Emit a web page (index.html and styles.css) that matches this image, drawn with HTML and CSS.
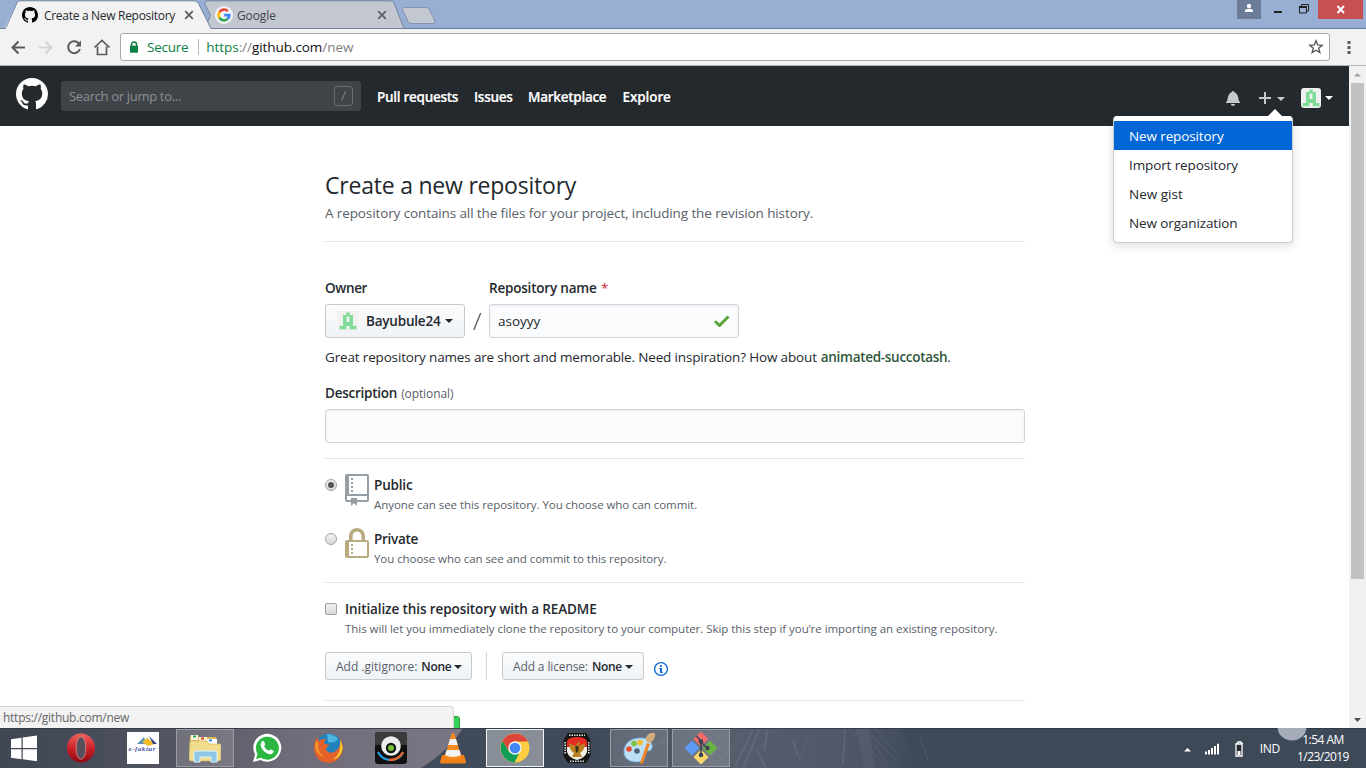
FILE: index.html
```html
<!DOCTYPE html>
<html lang="en">
<head>
<meta charset="utf-8">
<title>Create a New Repository</title>
<link rel="stylesheet" href="styles.css">
</head>
<body>
<svg class="defs" width="0" height="0">
  <symbol id="mark" viewBox="0 0 16 16"><path d="M8 0C3.58 0 0 3.58 0 8c0 3.54 2.29 6.53 5.47 7.59.4.07.55-.17.55-.38 0-.19-.01-.82-.01-1.49-2.01.37-2.53-.49-2.69-.94-.09-.23-.48-.94-.82-1.13-.28-.15-.68-.52-.01-.53.63-.01 1.08.58 1.23.82.72 1.21 1.87.87 2.33.66.07-.52.28-.87.51-1.07-1.78-.2-3.64-.89-3.64-3.95 0-.87.31-1.59.82-2.15-.08-.2-.36-1.02.08-2.12 0 0 .67-.21 2.2.82.64-.18 1.32-.27 2-.27.68 0 1.36.09 2 .27 1.53-1.04 2.2-.82 2.2-.82.44 1.1.16 1.92.08 2.12.51.56.82 1.27.82 2.15 0 3.07-1.87 3.75-3.65 3.95.29.25.54.73.54 1.48 0 1.07-.01 1.93-.01 2.2 0 .21.15.46.55.38A8.013 8.013 0 0 0 16 8c0-4.42-3.58-8-8-8z"/></symbol>
  <symbol id="avatar" viewBox="0 0 20 20"><path fill="#f0f0f0" d="M0 0h20v20H0z"/><path fill="#7fdc96" d="M8.300 1.500h3.400v2.500h3.300v11h3.400v3.300h-6.700v-3.300h-3.400v3.300h-6.700v-3.300h3.400v-11h3.300z"/><path fill="#f0f0f0" d="M8.600 5.500h2.800v5.500h-2.800z"/></symbol>
</svg>
<div class="tabs">
  <svg class="tabs-bg" width="1366" height="29" viewBox="0 0 1366 29">
    <path d="M0 28.500H1366" stroke="#66789b"/>
    <path d="M205 28.500 210.500 15 204.500 3Q205.500.8 209 .8H390Q393 .8 394 3L404 28.500z" fill="#c3c8d0" stroke="#7383a0"/>
    <path d="M402.500 9.500Q402 7.500 404 7.500H426.500Q428.500 7.500 429.300 9.500L435 21Q435.500 23.500 433 23.500H411Q408.800 23.500 408 21.500z" fill="#c3c8d0" stroke="#8592ab"/>
    <path d="M4 29 17 2.800Q18 .8 20.500 .8H194Q197 .8 198.500 3.500L211 29z" fill="#f2f2f2"/>
    <path d="M0 28.500H5.500L17 2.800Q18 .8 20.500 .8H194Q197 .8 198.500 3.500L211 28.500" fill="none" stroke="#7383a0"/>
  </svg>
  <div class="tab tab-active">
    <svg width="16" height="16"><use href="#mark"/></svg>
    <span class="t tab1-title">Create a New Repository</span>
    <svg class="x x1" width="10" height="10" viewBox="0 0 10 10"><path d="M1.200 1.200l7.600 7.600M8.800 1.200L1.200 8.800" stroke="#5a5a5a" stroke-width="1.700"/></svg>
  </div>
  <div class="tab tab-two">
    <svg width="18" height="18" viewBox="0 0 18 18"><circle cx="9" cy="9" r="9" fill="#f1f3f6"/><g fill="none" stroke-width="2.600"><path d="M12.900 5.200A5.400 5.400 0 0 0 4.400 6.200" stroke="#ea4335"/><path d="M4.400 6.200A5.400 5.400 0 0 0 4.400 11.800" stroke="#fbbc05"/><path d="M4.400 11.800A5.400 5.400 0 0 0 12.500 13.100" stroke="#34a853"/><path d="M12.500 13.100A5.400 5.400 0 0 0 14.400 9.100H9.200" stroke="#4285f4"/></g></svg>
    <span class="t tab2-title">Google</span>
    <svg class="x x2" width="10" height="10" viewBox="0 0 10 10"><path d="M1.200 1.200l7.600 7.600M8.800 1.200L1.200 8.800" stroke="#5d6066" stroke-width="1.700"/></svg>
  </div>
  <div class="winctl">
    <div class="user"><svg width="24" height="19"><circle cx="12" cy="6" r="2.200" fill="#fff"/><path d="M8 12V10.500Q8 8.800 12 8.800T16 10.500V12z" fill="#fff"/></svg></div>
    <svg width="57" height="19"><path d="M13 11h8v2h-8z" fill="#222"/><path d="M38.500 6.500h7v6.500h-7zM40.500 6V4.500h7v6.500H46" fill="none" stroke="#222"/><path d="M38 6h8v2h-8z" fill="#222"/></svg>
    <div class="close"><svg width="45" height="19"><path d="M19.500 6l6.500 7M26 6l-6.500 7" stroke="#fff" stroke-width="1.900"/></svg></div>
  </div>
</div>
<div class="toolbar">
  <svg class="nav" width="120" height="37" viewBox="0 0 120 37"><g fill="none" stroke-width="2"><path d="M25 18.500H12.500M18.500 12.500l-6 6 6 6" stroke="#5a5a5a"/><path d="M39 18.500h12.500M45.500 12.500l6 6-6 6" stroke="#d3d3d3"/><path d="M79.300 15A6 6 0 1 0 79.900 20" stroke="#5a5a5a"/><path d="M94.500 18.500l7.500-7 7.500 7M97.500 17.500v8h9v-8" stroke="#5a5a5a" stroke-width="1.700"/></g><path d="M81 11.500v6h-6z" fill="#5a5a5a"/></svg>
  <div class="omni">
    <svg class="lock" width="10" height="13" viewBox="0 0 10 13"><path d="M2.500 5V3.500a2.500 2.500 0 0 1 5 0V5" fill="none" stroke="#0b8043" stroke-width="1.500"/><path d="M1 4.700h8v7H1z" fill="#0b8043"/></svg>
    <span class="t secure">Secure</span><span class="sep"></span>
    <span class="t url"><span class="green">https</span><span class="gray">://</span>github.com<span class="gray">/new</span></span>
    <svg class="star" width="16" height="16" viewBox="0 0 16 16"><path d="M8 1.800l1.700 4.200 4.500.3-3.500 2.900 1.200 4.400L8 11.200l-3.900 2.400 1.200-4.400-3.500-2.900 4.500-.3z" fill="none" stroke="#555" stroke-width="1.300"/></svg>
  </div>
  <svg class="dots" width="4" height="14"><path d="M.5 1h3v3h-3zM.5 6h3v3h-3zM.5 11h3v3h-3z" fill="#5a5a5a"/></svg>
</div>
<div class="viewport">
  <div class="page">
    <header class="gh">
      <svg class="logo" width="32" height="32"><use href="#mark"/></svg>
      <div class="search"><span class="t">Search or jump to...</span><svg width="20" height="20"><rect x=".5" y=".5" width="18" height="19" rx="3" fill="none" stroke="#6b7075"/><path d="M11.500 5.500l-4 9" stroke="#8a8f94"/></svg></div>
      <nav><a class="t n1">Pull requests</a><a class="t n2">Issues</a><a class="t n3">Marketplace</a><a class="t n4">Explore</a></nav>
      <div class="gh-right">
        <svg class="bell" width="14" height="16" viewBox="0 0 14 16"><path fill="#c6c8ca" d="M14 12v1H0v-1l.73-.58c.77-.77.81-2.55 1.190-4.420C2.690 3.230 6 2 6 2c0-.55.45-1 1-1s1 .45 1 1c0 0 3.390 1.230 4.160 5 .38 1.880.42 3.660 1.190 4.420l.66.58H14zm-7 4c1.110 0 2-.89 2-2H5c0 1.110.89 2 2 2z"/></svg>
        <svg class="plus" width="27" height="12"><path d="M0 6h12M6 0v12" stroke="#c6c8ca" stroke-width="2"/><path d="M18 5h8l-4 4z" fill="#c6c8ca"/></svg>
        <svg class="ava" width="20" height="20"><use href="#avatar"/></svg>
        <svg class="caret-w" width="8" height="4"><path d="M0 0h8l-4 4z" fill="#fff"/></svg>
      </div>
    </header>
    <div class="menu">
      <a class="t m1 on">New repository</a><a class="t m2">Import repository</a><a class="t m3">New gist</a><a class="t m4">New organization</a>
    </div>
    <main>
      <h1><span class="t">Create a new repository</span></h1>
      <p class="sub"><span class="t">A repository contains all the files for your project, including the revision history.</span></p>
      <div class="pair labels"><div class="owner"><b class="t l1">Owner</b></div><div class="name"><b class="t l2">Repository name</b> <span class="req">*</span></div></div>
      <div class="pair controls">
        <div class="btn owner-btn"><svg width="20" height="20"><use href="#avatar"/></svg><b class="t">Bayubule24</b><i class="caret"></i></div>
        <svg class="slash" width="24" height="34"><path d="M15.700 9l-6.900 17" stroke="#586069" stroke-width="1.400"/></svg>
        <div class="field name-field"><span class="t">asoyyy</span><svg width="16" height="12"><path d="M1 6.300l4.500 4.200L14.500 1.500" fill="none" stroke="#55a532" stroke-width="2.900"/></svg></div>
      </div>
      <p class="hint"><span class="t h1t">Great repository names are short and memorable. Need inspiration? How about</span><b class="t h2t">animated-succotash</b>.</p>
      <p class="desc"><b class="t">Description</b><span class="t">(optional)</span></p>
      <div class="field desc-field"></div>
      <section class="vis">
        <div class="opt"><span class="radio checked"></span><svg width="24" height="32" viewBox="0 0 12 16" fill="#959da5"><path d="M4 9H3V8h1v1zm0-3H3v1h1V6zm0-2H3v1h1V4zm0-2H3v1h1V2zm8-1v12c0 .55-.45 1-1 1H6v2l-1.500-1.500L3 16v-2H1c-.55 0-1-.45-1-1V1c0-.55.45-1 1-1h10c.55 0 1 .45 1 1zm-1 10H1v2h2v-1h3v1h5v-2zm0-10H2v9h9V1z"/></svg><div><b class="t o1">Public</b><small class="t o2">Anyone can see this repository. You choose who can commit.</small></div></div>
        <div class="opt"><span class="radio"></span><svg width="24" height="32" viewBox="0 0 12 16" fill="#b9aa80"><path d="M4 13H3v-1h1v1zm8-6v7c0 .55-.45 1-1 1H1c-.55 0-1-.45-1-1V7c0-.55.45-1 1-1h1V4c0-2.200 1.800-4 4-4s4 1.800 4 4v2h1c.55 0 1 .45 1 1zM3.800 6h4.410V4c0-1.220-.98-2.200-2.200-2.200-1.220 0-2.200.98-2.200 2.200v2H3.800zM11 7H2v7h9V7zM4 8H3v1h1V8zm0 2H3v1h1v-1z"/></svg><div><b class="t o3">Private</b><small class="t o4">You choose who can see and commit to this repository.</small></div></div>
      </section>
      <section class="init">
        <div class="opt"><span class="check"></span><div><b class="t i1">Initialize this repository with a README</b><small class="t i2">This will let you immediately clone the repository to your computer. Skip this step if you’re importing an existing repository.</small></div></div>
        <div class="picks">
          <div class="btn small"><span class="t g1">Add .gitignore:</span><b class="t g2">None</b><i class="caret"></i></div><span class="bar"></span>
          <div class="btn small lic"><span class="t g3">Add a license:</span><b class="t g4">None</b><i class="caret"></i></div>
          <svg class="info" width="14" height="16" viewBox="0 0 14 16"><path fill="#0366d6" d="M6.300 5.690a.942.942 0 0 1-.28-.7c0-.28.09-.52.28-.7.19-.18.42-.28.7-.28.28 0 .52.09.7.28.18.19.28.42.28.7 0 .28-.09.52-.28.7a1 1 0 0 1-.7.3c-.28 0-.52-.11-.7-.3zM8 7.990c-.02-.25-.11-.48-.31-.69-.2-.19-.42-.3-.69-.31H6c-.27.02-.48.13-.69.31-.2.2-.3.44-.31.69h1v3c.02.27.11.5.31.69.2.2.42.31.69.31h1c.27 0 .48-.11.69-.31.2-.19.3-.42.31-.69H8V7.980v.01zM7 2.300c-3.140 0-5.700 2.540-5.700 5.680 0 3.140 2.560 5.700 5.700 5.700s5.700-2.550 5.700-5.700c0-3.150-2.560-5.690-5.700-5.690v.01zM7 .98c3.860 0 7 3.140 7 7s-3.140 7-7 7-7-3.120-7-7 3.140-7 7-7z"/></svg>
        </div>
      </section>
      <div class="create"></div>
    </main>
  </div>
  <div class="scroll"><svg width="17" height="16"><path d="M5 10.500h7L8.500 7z" fill="#a3a3a3"/></svg><div class="thumb"></div><svg width="17" height="17"><path d="M5 7h7l-3.500 4z" fill="#505050"/></svg></div>
  <div class="status"><span class="t">https://github.com/new</span></div>
</div>
<footer class="taskbar">
  <svg class="wall" width="1366" height="40" viewBox="0 0 1366 40">
    <defs><linearGradient id="w"><stop offset="0" stop-color="#414654"/><stop offset=".2" stop-color="#474c5a"/><stop offset=".42" stop-color="#585865"/><stop offset=".62" stop-color="#6f6b78"/><stop offset="1" stop-color="#7b7684"/></linearGradient><linearGradient id="d"><stop offset="0" stop-color="#414b5b"/><stop offset="1" stop-color="#3e4958"/></linearGradient><linearGradient id="hair"><stop offset="0" stop-color="#6a6f7d" stop-opacity="0"/><stop offset=".35" stop-color="#6a6f7d" stop-opacity=".55"/><stop offset=".75" stop-color="#6a6f7d" stop-opacity=".4"/><stop offset="1" stop-color="#6a6f7d" stop-opacity="0"/></linearGradient></defs>
    <path d="M0 0h1366v40H0z" fill="url(#d)"/><path d="M0 0H463Q450 22 421 40H0z" fill="url(#w)"/><path d="M600 0h300l20 40H600z" fill="url(#hair)"/>
    <g stroke="#8b8e9d" opacity=".22" fill="none"><path d="M735 38l18-36M743 40l16-38M757 22l8 17M793 12l5 16M768 2l-4 20M845 2l-2 34" stroke-width="2"/><path d="M848 0q25 18 35 40M856 0q25 18 31 40M865 0q20 22 35 35M875 0q12 16 25 28M920 10l8 22M808 12l-10 22M700 38l30-30M715 38l32-36M618 35l50-24"/><path d="M862 0l8 40" stroke-width="12" opacity=".6"/></g>
    <path d="M0 .5h1366" stroke="#2f3644" opacity=".8"/><ellipse cx="1292" cy="-1" rx="14.500" ry="13.500" fill="#a6abb9"/>
  </svg>
  <div class="apps">
    <div class="app a-win"><svg width="28" height="27" viewBox="0 0 28 27" fill="#fff"><path d="M1 4.300L11.500 2.800V13H1zM12.700 2.600L27 .5V13H12.700zM1 14.200h10.500v10L1 22.700zM12.700 14.200H27v12l-14.300-1.900z"/></svg></div>
    <div class="app a-opera"><svg width="30" height="30" viewBox="0 0 30 30"><defs><linearGradient id="op" x2="0" y2="1"><stop stop-color="#f0625a"/><stop offset=".5" stop-color="#cc2229"/><stop offset="1" stop-color="#8e0a12"/></linearGradient></defs><ellipse cx="15" cy="15" rx="14" ry="14.500" fill="url(#op)"/><ellipse cx="15" cy="15" rx="5" ry="11.300" fill="#58505a" stroke="#f08a84" stroke-width=".8"/></svg></div>
    <div class="app a-fak"><svg width="32" height="32"><path fill="#fff" d="M0 0h32v32H0z"/><path d="M10 12l7-7 2 7z" fill="#5c93bd"/><path d="M15 10l5-4 8 6-7 2z" fill="#f2bb26"/><path d="M22 4l8 8h-4z" fill="#34418c"/><text x="1.500" y="19" textLength="27" class="fak">e-faktur</text></svg></div>
    <div class="app a-files open"><svg width="32" height="30" viewBox="0 0 32 30"><path d="M1 4q0-2 2-2h5l2 2h17l1 4H1z" fill="#d9b85f"/><path d="M2 2h7v5H2z" fill="#fff8df"/><path d="M4 2.500h3v2H4z" fill="#1cac4f"/><path d="M10 4h8v5h-8z" fill="#fff3cc"/><path d="M12 4.500h3v2h-3z" fill="#d33a2c"/><path d="M18 6h10v5H18z" fill="#fff"/><path d="M20 6.500h3v2h-3z" fill="#2894e8"/><path d="M1 8h17l2 3h12v14q0 3-3 3H2q-2 0-2-3z" fill="#f2dc8e" stroke="#d1b35a" stroke-width=".7"/><path d="M5 29v-9q0-2 2-2h19q2 0 2 2v9h-6v-5H11v5z" fill="#8fc8e6" stroke="#e0f5ff"/></svg></div>
    <div class="app a-wa"><svg width="30" height="30" viewBox="0 0 30 30"><path d="M1 29l2-7.500A14 14 0 1 1 8.500 27z" fill="#fff"/><path d="M4 26l1.500-5A11.500 11.500 0 1 1 9 24.700z" fill="#2cb742"/><path d="M10 8.500c1-.8 1.800-.5 2.200.3l1 2.200c.3.600-1.200 1.800-.9 2.400 1.100 2.100 2.400 3.300 4.500 4.200.8.300 1.500-1.500 2.200-1.200l2.500 1.300c.7.300-.4 3.200-2.800 3.500-3.500.4-9.600-4.600-10-8.800-.1-1.700.5-3.300 1.300-3.900z" fill="#fff"/></svg></div>
    <div class="app a-ff"><svg width="32" height="32" viewBox="0 0 32 32"><circle cx="16" cy="14" r="12.500" fill="#2182bd"/><path d="M14 2q7 0 11 5-4 5-10 3z" fill="#4bb5df"/><path d="M27 7q5 8 1.500 15Q24 31 15 31 4 30 1.500 20 0 13 4 5l2 4q4-3 7-2-3 3-1 5l5 1q-4 2-4 5 3 4 8 2 7-3 6-13z" fill="#e2622a"/><path d="M27 8q5 8 0 15-3 4-7 5 9-7 7-20z" fill="#ffcf2e"/><path d="M3 9q-2 7 2 12 3 4 6 4-7-5-6-14z" fill="#f69b28"/></svg></div>
    <div class="app a-cam"><svg width="32" height="32" viewBox="0 0 32 32"><rect width="32" height="32" rx="3" fill="#101010"/><path d="M0 3q0-3 3-3h26q3 0 3 3v10H0z" fill="#3c3c3c"/><path d="M3 20q4 8 13 8 8 0 12-7" fill="none" stroke="#26a3e8" stroke-width="2"/><path d="M14 28q10 0 14-8" fill="none" stroke="#e5622a" stroke-width="2.500"/><circle cx="16" cy="14" r="9.800" fill="#ececec"/><circle cx="16" cy="16" r="5.200" fill="#151515"/><circle cx="16" cy="16" r="3" fill="#73bf35"/></svg></div>
    <div class="app a-vlc"><svg width="28" height="32" viewBox="0 0 28 32"><path d="M3 23h22l2 7q0 1.500-2 1.500H3q-2 0-2-1.500z" fill="#f08018"/><path d="M12.500 2q1.500-2 3 0l7 23q-8.500 5-17 0z" fill="#f58a1d"/><path d="M11 7h6l1.800 6H9.200zM7.500 18h13l1.500 5q-8 4-16 0z" fill="#f2f2f2"/></svg></div>
    <div class="app a-chrome open active"><svg width="30" height="30" viewBox="0 0 30 30"><circle cx="15" cy="15" r="14.500" fill="#ffcd41"/><path d="M2.500 8A14.500 14.500 0 0 1 28 8.500H15l-6.500 9z" fill="#db4437"/><path d="M2.500 8l7 11.500 9.500 1L14.500 29.500A14.500 14.500 0 0 1 2.500 8z" fill="#0f9d58"/><circle cx="15" cy="15" r="6.700" fill="#f4f4f4"/><circle cx="15" cy="15" r="5.300" fill="#4285f4"/></svg></div>
    <div class="app a-kpu"><svg width="28" height="32" viewBox="0 0 28 32"><path d="M5 1h18l4.500 7v16L23 31H5L.5 24V8z" fill="#161616"/><path d="M4 15V9q2-4 10-4t10 4v6z" fill="#e32b24"/><path d="M4 15h20v5q-2 6-10 8-8-2-10-8z" fill="#f3eee4"/><path d="M14 12l1.500-3 1.500 2-1 3 6-3q0 7-5 10l2 4h-10l2-4Q6 18 6 11l6 3z" fill="#b98122"/><path d="M12.500 14h3v5l-1.500 2-1.500-2z" fill="#40301c"/><path d="M6 3.200h16M7 29.200h14M2.200 10v12M25.800 10v12" stroke="#ddd" stroke-width="1.600" stroke-dasharray="1.500 1"/></svg></div>
    <div class="app a-paint open"><svg width="34" height="32" viewBox="0 0 34 32"><path d="M2 18Q4 7 17 6q11-1 13 7 1 6-5 6-4 1-2 5 0 6-9 6Q1 29 2 18z" fill="#bde0f4" stroke="#7ab4dc"/><circle cx="7" cy="17" r="2.800" fill="#e64d3a"/><circle cx="12" cy="11.500" r="2.800" fill="#7cc142"/><circle cx="18" cy="10.500" r="2.800" fill="#f9ba30"/><circle cx="15" cy="19" r="2.800" fill="#50647e"/><path d="M18 31l7-20 3 1-7 19q-2 2-3 0z" fill="#ee8427"/><path d="M24 9q-1-6 5-8 5-1 4 3-1 5-5 7z" fill="#d5ad7a"/></svg></div>
    <div class="app a-git open"><svg width="34" height="34" viewBox="0 0 34 34"><path d="M9.500 8L16 1.500q1-1 2 0L24.500 8 17 15.500z" fill="#f26a6a"/><path d="M26 9.500l6.500 6.500q1 1 0 2L26 24.500 18.500 17z" fill="#69b345"/><path d="M8 9.500L1.500 16q-1 1 0 2L8 24.500 15.500 17z" fill="#5e9af5"/><path d="M17 18.500l7.500 7.500L18 32.500q-1 1-2 0L9.500 26z" fill="#fbd769"/><path d="M12.500 5l4.500 5v14M17 11l6 6" stroke="#3d4552" stroke-width="1.600" fill="none"/><circle cx="17" cy="10.500" r="2.300" fill="#3d4552"/><circle cx="17" cy="24" r="2.300" fill="#3d4552"/><circle cx="23.500" cy="17" r="2.300" fill="#3d4552"/></svg></div>
  </div>
  <div class="tray">
    <svg class="tray-icons" width="60" height="20" viewBox="0 0 60 20"><path d="M1 12.500h7L4.500 9z" fill="#fff"/><path d="M22 12.500h2v3h-2zM25 11h2v4.500h-2zM28 9h2v6.500h-2zM31 7h2v8.500h-2zM34 4.800h2v10.700h-2z" fill="#fff"/><path d="M53 4.500h2V3h3v1.500h2v0M53 5h6v12h-6z" fill="#252b34" stroke="#fff" stroke-width="1.300"/><path d="M54.500 12h3v4h-3z" fill="#fff"/></svg>
    <span class="t ind">IND</span>
    <div class="clock"><span class="t c1">1:54 AM</span><span class="t c2">1/23/2019</span></div>
  </div>
</footer>
</body>
</html>
```
FILE: styles.css
```css
* { box-sizing: border-box; }
body { margin: 0; width: 1366px; height: 768px; overflow: hidden; display: flex; flex-direction: column; font: 13.5px "Open Sans", sans-serif; color: #24292e; background: #fff; }
p, h1 { margin: 0; }
b { font-weight: 600; }
svg { display: block; flex: none; }
.defs { position: absolute; }
.t { white-space: nowrap; }
.tabs { position: relative; height: 29px; background: #98aed2; display: flex; font-size: 12px; flex: none; }
.tabs-bg { position: absolute; left: 0; top: 0; }
.tab { position: relative; display: flex; align-items: center; height: 30px; }
.tab-active { width: 215px; padding-left: 22px; gap: 6px; }
.tab1-title { letter-spacing: -.3px; }
.tab-two { width: 200px; gap: 4px; color: #3f444c; }
.tab2-title { letter-spacing: -.1px; }
.tab .x { position: absolute; top: 10px; }
.x1 { left: 184px; }
.x2 { left: 162px; }
.winctl { margin-left: auto; display: flex; padding-right: 3px; }
.user { background: #6b7d98; height: 19px; }
.close { background: #c75050; height: 19px; }
.toolbar { height: 37px; background: #f2f2f2; border-bottom: 1px solid #b6b6b6; display: flex; flex: none; }
.omni { margin-top: 4px; width: 1210px; height: 28px; background: #fff; border: 1px solid #a9a9a9; border-radius: 3px; display: flex; align-items: center; padding-left: 8px; }
.secure { color: #0b8043; margin-left: 8px; letter-spacing: -.25px; }
.sep { width: 1px; height: 16px; background: #b8b8b8; margin: 0 7px 0 10px; }
.green { color: #0b8043; }
.gray { color: #808080; }
.url { color: #111; letter-spacing: -.06px; }
.star { margin-left: auto; margin-right: 5px; }
.dots { margin: 11px 0 0 17px; }
.viewport { position: relative; height: 662px; display: flex; flex: none; overflow: hidden; }
.page { position: relative; width: 1349px; }
.gh { height: 60px; background: #24292e; display: flex; align-items: flex-start; color: #fff; padding: 12px 16px 0; }
.logo { fill: #fff; }
.search { margin: 3px 0 0 13px; width: 300px; height: 30px; background: #3f4448; border-radius: 3px; display: flex; align-items: center; padding: 0 7px 0 8px; color: #8c9196; justify-content: space-between; font-size: 13px; letter-spacing: -.32px; }
nav { display: flex; margin-left: 16px; line-height: 38px; gap: 16px; font-weight: 600; letter-spacing: -.28px; -webkit-text-stroke: .2px #fff; }
.n1 { width: 81px; }
.n2 { width: 38px; }
.n3 { width: 78.5px; }
.n4 { letter-spacing: -.1px; }
.gh-right { margin-left: auto; display: flex; align-items: center; height: 40px; }
.plus { margin-left: 19px; }
.ava { margin-left: 15px; border-radius: 3px; }
.caret-w { margin: 0 0 0 4px; }
.menu { position: absolute; left: 1113px; top: 50px; width: 180px; height: 127px; border: 1px solid #c9cbce; border-top-color: #fff; border-radius: 4px; background: #fff; box-shadow: 0 3px 10px rgba(27,31,35,.15); padding-top: 4px; display: flex; flex-direction: column; letter-spacing: -.12px; }
.menu::before { content: ""; position: absolute; right: 9px; top: -8px; border: 8px solid transparent; border-top: 0; border-bottom-color: #fff; }
.menu a { height: 29px; line-height: 31px; padding-left: 15px; }
.menu .m3 { letter-spacing: 0; }
.menu .on { background: #0366d6; color: #fff; }
main { width: 700px; margin-left: 325px; padding-top: 44px; }
h1 { font-size: 23px; font-weight: 400; line-height: 30px; height: 32px; letter-spacing: -.22px; }
.sub { color: #586069; line-height: 22px; height: 40px; border-bottom: 1px solid #e1e4e8; letter-spacing: -.11px; }
.pair { display: flex; }
.labels { margin-top: 36px; line-height: 20px; height: 26px; }
.l1 { letter-spacing: -.36px; }
.l2 { letter-spacing: -.2px; }
.owner { width: 164px; }
.req { color: #cb2431; margin-left: 1px; }
.btn { display: flex; align-items: center; border: 1px solid #c6cacd; border-radius: 3px; background: linear-gradient(#fafbfc, #eff3f6); }
.owner-btn { width: 140px; height: 34px; padding-left: 12px; }
.owner-btn b { margin-left: 8px; letter-spacing: -.2px; }
.caret { border: 4px solid transparent; border-bottom: 0; border-top-color: #24292e; margin-left: 4px; }
.field { border: 1px solid #d1d5da; border-radius: 3px; background: #fafbfc; box-shadow: inset 0 1px 2px rgba(27,31,35,.075); height: 34px; }
.name-field { width: 250px; display: flex; align-items: center; padding: 0 8px; justify-content: space-between; }
.hint { margin-top: 9px; line-height: 20px; display: flex; letter-spacing: -.16px; }
.hint .h2t { color: #30573b; margin-left: 4px; letter-spacing: -.3px; }
.desc { margin-top: 16px; line-height: 20px; display: flex; gap: 4px; margin-bottom: 6px; letter-spacing: -.25px; }
.desc span { font-size: 12px; color: #586069; letter-spacing: -.1px; padding-top: 1px; height: 20px; }
.vis { margin-top: 15px; border-top: 1px solid #e1e4e8; border-bottom: 1px solid #e1e4e8; height: 125px; padding-top: 15px; }
.opt { display: flex; height: 54px; }
.opt div { display: flex; flex-direction: column; line-height: 20px; margin-left: 5px; margin-top: 1px; }
.opt small { font-size: 11.5px; color: #586069; letter-spacing: -.06px; }
.o1 { letter-spacing: -.17px; }
.o3 { letter-spacing: -.3px; }
.i1 { letter-spacing: -.1px; }
.opt .i2 { letter-spacing: -.04px; }
.radio { width: 12px; height: 12px; border: 1px solid #a0a0a0; border-radius: 50%; background: linear-gradient(#f2f2f2, #d9d9d9); margin: 5px 8px 0 0; display: grid; place-items: center; }
.checked::after { content: ""; width: 6px; height: 6px; border-radius: 50%; background: #555; }
.init { height: 118px; border-bottom: 1px solid #e1e4e8; padding-top: 15px; }
.check { width: 12px; height: 12px; border: 1px solid #a0a0a0; border-radius: 2px; background: linear-gradient(#efefef, #d9d9d9); margin: 5px 3px 0 0; }
.picks { display: flex; }
.small { height: 28px; width: 147px; padding: 1px 0 0 10px; font-size: 12px; color: #586069; }
.small b { margin-left: 4px; color: #24292e; letter-spacing: -.3px; }
.small .caret { margin-left: 3px; }
.g3 { letter-spacing: -.13px; }
.bar { width: 1px; height: 28px; background: #d1d5da; margin: 0 15px 0 14px; }
.lic { width: 142px; }
.info { margin: 9px 0 0 10px; }
.create { margin-top: 15px; width: 135px; height: 34px; border: 1px solid #28a03f; border-radius: 3px; background: #34d058; }
.scroll { width: 17px; background: #f1f1f1; }
.thumb { width: 13px; height: 496px; margin: 1px 0 132px 2px; background: #c1c1c1; }
.status { position: absolute; left: 0; top: 640px; width: 454px; height: 23px; background: #f2f2f2; border: 1px solid #d4d4d4; border-left: 0; border-top-right-radius: 4px; color: #666; font-size: 12px; line-height: 22px; padding-left: 3px; letter-spacing: -.26px; }
.taskbar { position: relative; height: 40px; display: flex; flex: none; }
.wall { position: absolute; left: 0; top: 0; }
.apps { position: relative; display: flex; gap: 4px; }
.app { width: 58px; height: 38px; margin-top: 1px; display: grid; place-items: center; }
.a-win { width: 48px; }
.open { border: 1px solid #9a9ca6; background: rgba(255,255,255,.16); }
.active { border-color: #f4f4f6; background: rgba(255,255,255,.38); }
.fak { font: italic bold 7px "Liberation Serif", serif; fill: #4b4f9e; }
.tray { position: relative; margin-left: auto; display: flex; align-items: center; color: #fff; font-size: 12px; padding-right: 16px; }
.tray-icons { margin-top: 1px; }
.ind { margin-left: 17px; letter-spacing: -.3px; }
.clock { width: 54px; margin-left: 16px; display: flex; flex-direction: column; align-items: center; line-height: 17px; letter-spacing: -.55px; }
```
